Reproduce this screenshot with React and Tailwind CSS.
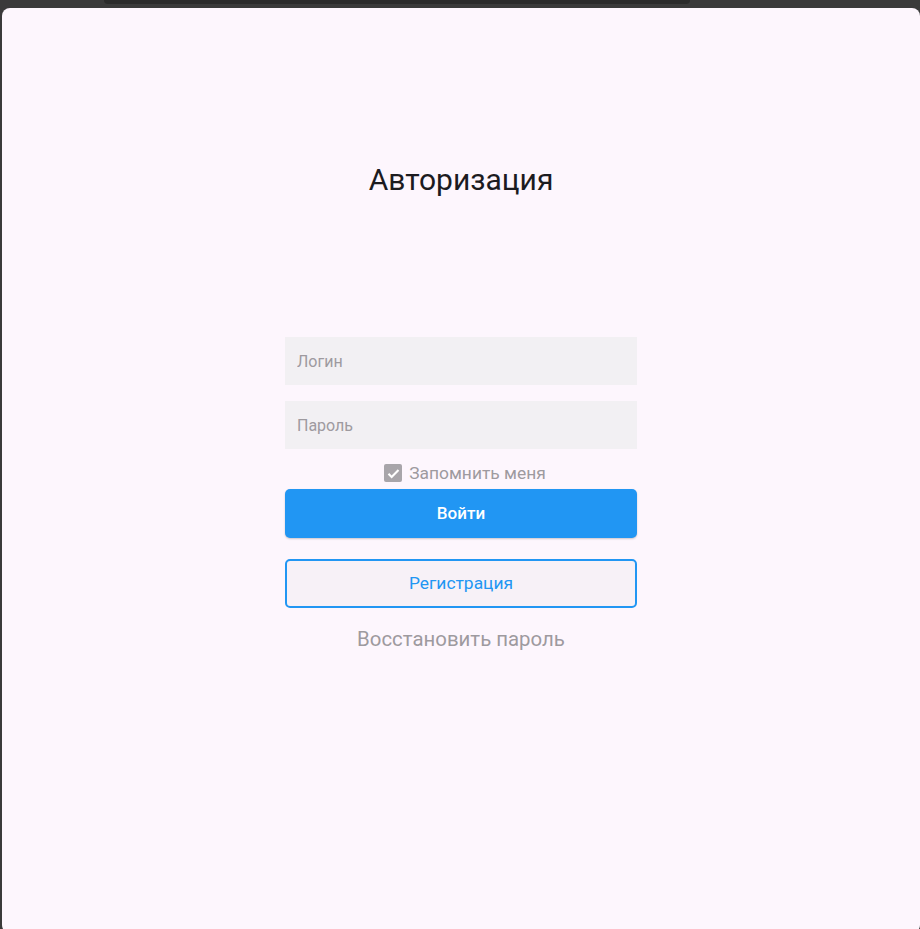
import React, { useState } from 'react';

export default function App() {
  const [remember, setRemember] = useState(true);

  return (
    <div className="h-[929px] w-[920px] overflow-hidden bg-[#3a3a3a]" style={{ fontFamily: 'Roboto, "Noto Sans", sans-serif' }}>
      <div className="ml-[104px] h-[4px] w-[586px] rounded-b-[6px] bg-[#2b2b2b]" />
      <div className="ml-[2px] mt-[4px] flex h-[925px] flex-col items-center rounded-[8px] bg-[#fdf6fd]">
        <h1 className="mt-[152px] text-[30px] font-normal leading-[40px] text-[#1c1b1f]">Авторизация</h1>

        <form className="mt-[137px] flex w-[352px] flex-col" onSubmit={(e) => e.preventDefault()}>
          <input
            type="text"
            placeholder="Логин"
            className="h-[48px] w-full bg-[#f2f0f3] px-3 text-[16px] text-[#1c1b1f] outline-none placeholder:text-[#9e9a9f]"
          />
          <input
            type="password"
            placeholder="Пароль"
            className="mt-[16px] h-[48px] w-full bg-[#f2f0f3] px-3 text-[16px] text-[#1c1b1f] outline-none placeholder:text-[#9e9a9f]"
          />

          <label className="ml-[8px] mt-[15px] flex cursor-pointer items-center justify-center gap-[7px] text-[17.4px] leading-[18px] text-[#9e9a9f]">
            <span
              onClick={() => setRemember(!remember)}
              className="flex h-[18px] w-[18px] items-center justify-center rounded-[2px] bg-[#a8a5aa]"
            >
              {remember && (
                <svg width="15" height="15" viewBox="0 0 24 24" fill="none" stroke="#fff" strokeWidth="3.4">
                  <path d="M4 12.5l5 5L20 6.5" />
                </svg>
              )}
            </span>
            Запомнить меня
          </label>

          <button
            type="submit"
            className="mt-[7px] h-[49px] w-full rounded-[5px] bg-[#2196f3] text-[17px] font-medium text-white shadow-[0_1px_2px_rgba(0,0,0,0.2)]"
          >
            Войти
          </button>
          <button
            type="button"
            className="mt-[21px] h-[49px] w-full rounded-[5px] border-2 border-[#2196f3] bg-[#f7f1f7] text-[17.4px] text-[#2196f3]"
          >
            Регистрация
          </button>
          <button type="button" className="mt-[17px] text-[20.4px] leading-[28px] text-[#9e9a9f]">
            Восстановить пароль
          </button>
        </form>
      </div>
    </div>
  );
}
